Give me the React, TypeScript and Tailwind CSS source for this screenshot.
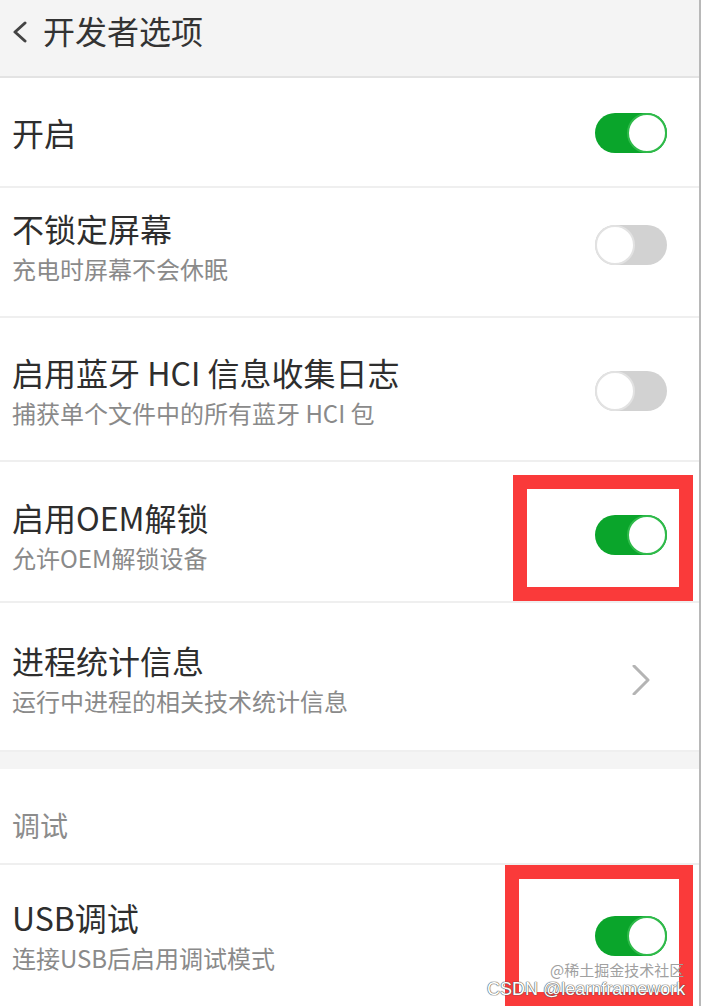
import React from "react";

const font = { fontFamily: '"Noto Sans CJK SC", "Noto Sans", sans-serif' };

function Toggle({ on }: { on: boolean }) {
  if (on) {
    return (
      <div className="flex h-[40px] w-[72px] justify-end rounded-full bg-[#0aa52b]">
        <div className="h-[40px] w-[40px] rounded-full border-2 border-[#2fba4a] bg-white" />
      </div>
    );
  }
  return (
    <div className="flex h-[40px] w-[72px] justify-start rounded-full bg-[#d2d2d2]">
      <div className="h-[40px] w-[40px] rounded-full border-2 border-[#e2e2e2] bg-white" />
    </div>
  );
}

function Chevron() {
  return (
    <svg width="18" height="30" viewBox="0 0 18 30" fill="none">
      <polyline points="2,1 16,15 2,29" stroke="#b4b4b4" strokeWidth="3" strokeLinecap="round" strokeLinejoin="round" />
    </svg>
  );
}

type Row = {
  title: string;
  sub?: string;
  h: string;
  textMt: string;
  ctrlMt: string;
  ctrl: React.ReactNode;
};

const rows: Row[] = [
  { title: "不锁定屏幕", sub: "充电时屏幕不会休眠", h: "h-[130px]", textMt: "mt-[22px]", ctrlMt: "mt-[37px]", ctrl: <Toggle on={false} /> },
  { title: "启用蓝牙 HCI 信息收集日志", sub: "捕获单个文件中的所有蓝牙 HCI 包", h: "h-[144px]", textMt: "mt-[36px]", ctrlMt: "mt-[53px]", ctrl: <Toggle on={false} /> },
  { title: "启用OEM解锁", sub: "允许OEM解锁设备", h: "h-[141px]", textMt: "mt-[37px]", ctrlMt: "mt-[53px]", ctrl: <Toggle on /> },
  { title: "进程统计信息", sub: "运行中进程的相关技术统计信息", h: "h-[149px]", textMt: "mt-[39px]", ctrlMt: "mt-[62px] mr-[17px]", ctrl: <Chevron /> },
];

export default function App() {
  return (
    <div className="relative flex h-[1006px] w-[706px] overflow-hidden bg-white" style={font}>
      <div className="flex w-[699px] flex-col">
        {/* top bar */}
        <div className="flex h-[78px] items-start border-b-2 border-[#e3e3e3] bg-[#f4f4f4] pl-[12px] pt-[10px]">
          <svg width="16" height="22" viewBox="0 0 16 22" fill="none" className="mt-[11px]">
            <polyline points="13,2 3,11 13,20" stroke="#444" strokeWidth="3" strokeLinecap="round" strokeLinejoin="round" />
          </svg>
          <span className="ml-[15px] text-[32px] leading-[40px] text-[#333]">开发者选项</span>
        </div>

        {/* 开启 */}
        <div className="flex h-[110px] items-center justify-between border-b-2 border-[#efefef] pl-[12px] pr-[32px]">
          <span className="text-[32px] leading-[36px] text-[#2e2e2e]">开启</span>
          <div className="mt-[2px]">
            <Toggle on />
          </div>
        </div>

        {rows.map((r) => (
          <div key={r.title} className={`flex ${r.h} items-start justify-between border-b-2 border-[#efefef] pl-[12px] pr-[32px]`}>
            <div className={`flex flex-col gap-[8px] ${r.textMt}`}>
              <span className="text-[32px] leading-[36px] text-[#2e2e2e]">{r.title}</span>
              <span className="text-[24px] leading-[30px] text-[#8a8a8a]">{r.sub}</span>
            </div>
            <div className={r.ctrlMt}>{r.ctrl}</div>
          </div>
        ))}

        <div className="h-[17px] bg-[#f4f4f4]" />

        {/* section */}
        <div className="h-[96px] border-b-2 border-[#efefef] pl-[12px] pt-[38px]">
          <span className="text-[28px] leading-[36px] text-[#8c8c8c]">调试</span>
        </div>

        <div className="flex flex-1 items-start justify-between pl-[12px] pr-[32px]">
          <div className="mt-[34px] flex flex-col gap-[8px]">
            <span className="text-[32px] leading-[36px] text-[#2e2e2e]">USB调试</span>
            <span className="text-[24px] leading-[30px] text-[#8a8a8a]">连接USB后启用调试模式</span>
          </div>
          <div className="mt-[51px]">
            <Toggle on />
          </div>
        </div>
      </div>
      <div className="w-[2px] bg-[#b8b8b8]" />
      <div className="flex-1 bg-white" />

      {/* annotations */}
      <div className="absolute left-[513px] top-[475px] h-[126px] w-[180px] border-[14px] border-[#fa3a3a]" />
      <div className="absolute left-[505px] top-[865px] h-[141px] w-[188px] border-[14px] border-[#fa3a3a]" />

      {/* watermark */}
      <div className="absolute left-[550px] top-[962px] text-[15px] leading-[16px] text-[#a0a0a0]">@稀土掘金技术社区</div>
      <div
        className="absolute left-[487px] top-[979px] text-[18px] leading-[20px] text-white [text-shadow:0_0_1px_#555,0_0_1px_#555,0_0_1px_#555]"
        style={{ fontFamily: '"Liberation Sans", Arial, sans-serif' }}
      >
        CSDN @learnframework
      </div>
    </div>
  );
}
